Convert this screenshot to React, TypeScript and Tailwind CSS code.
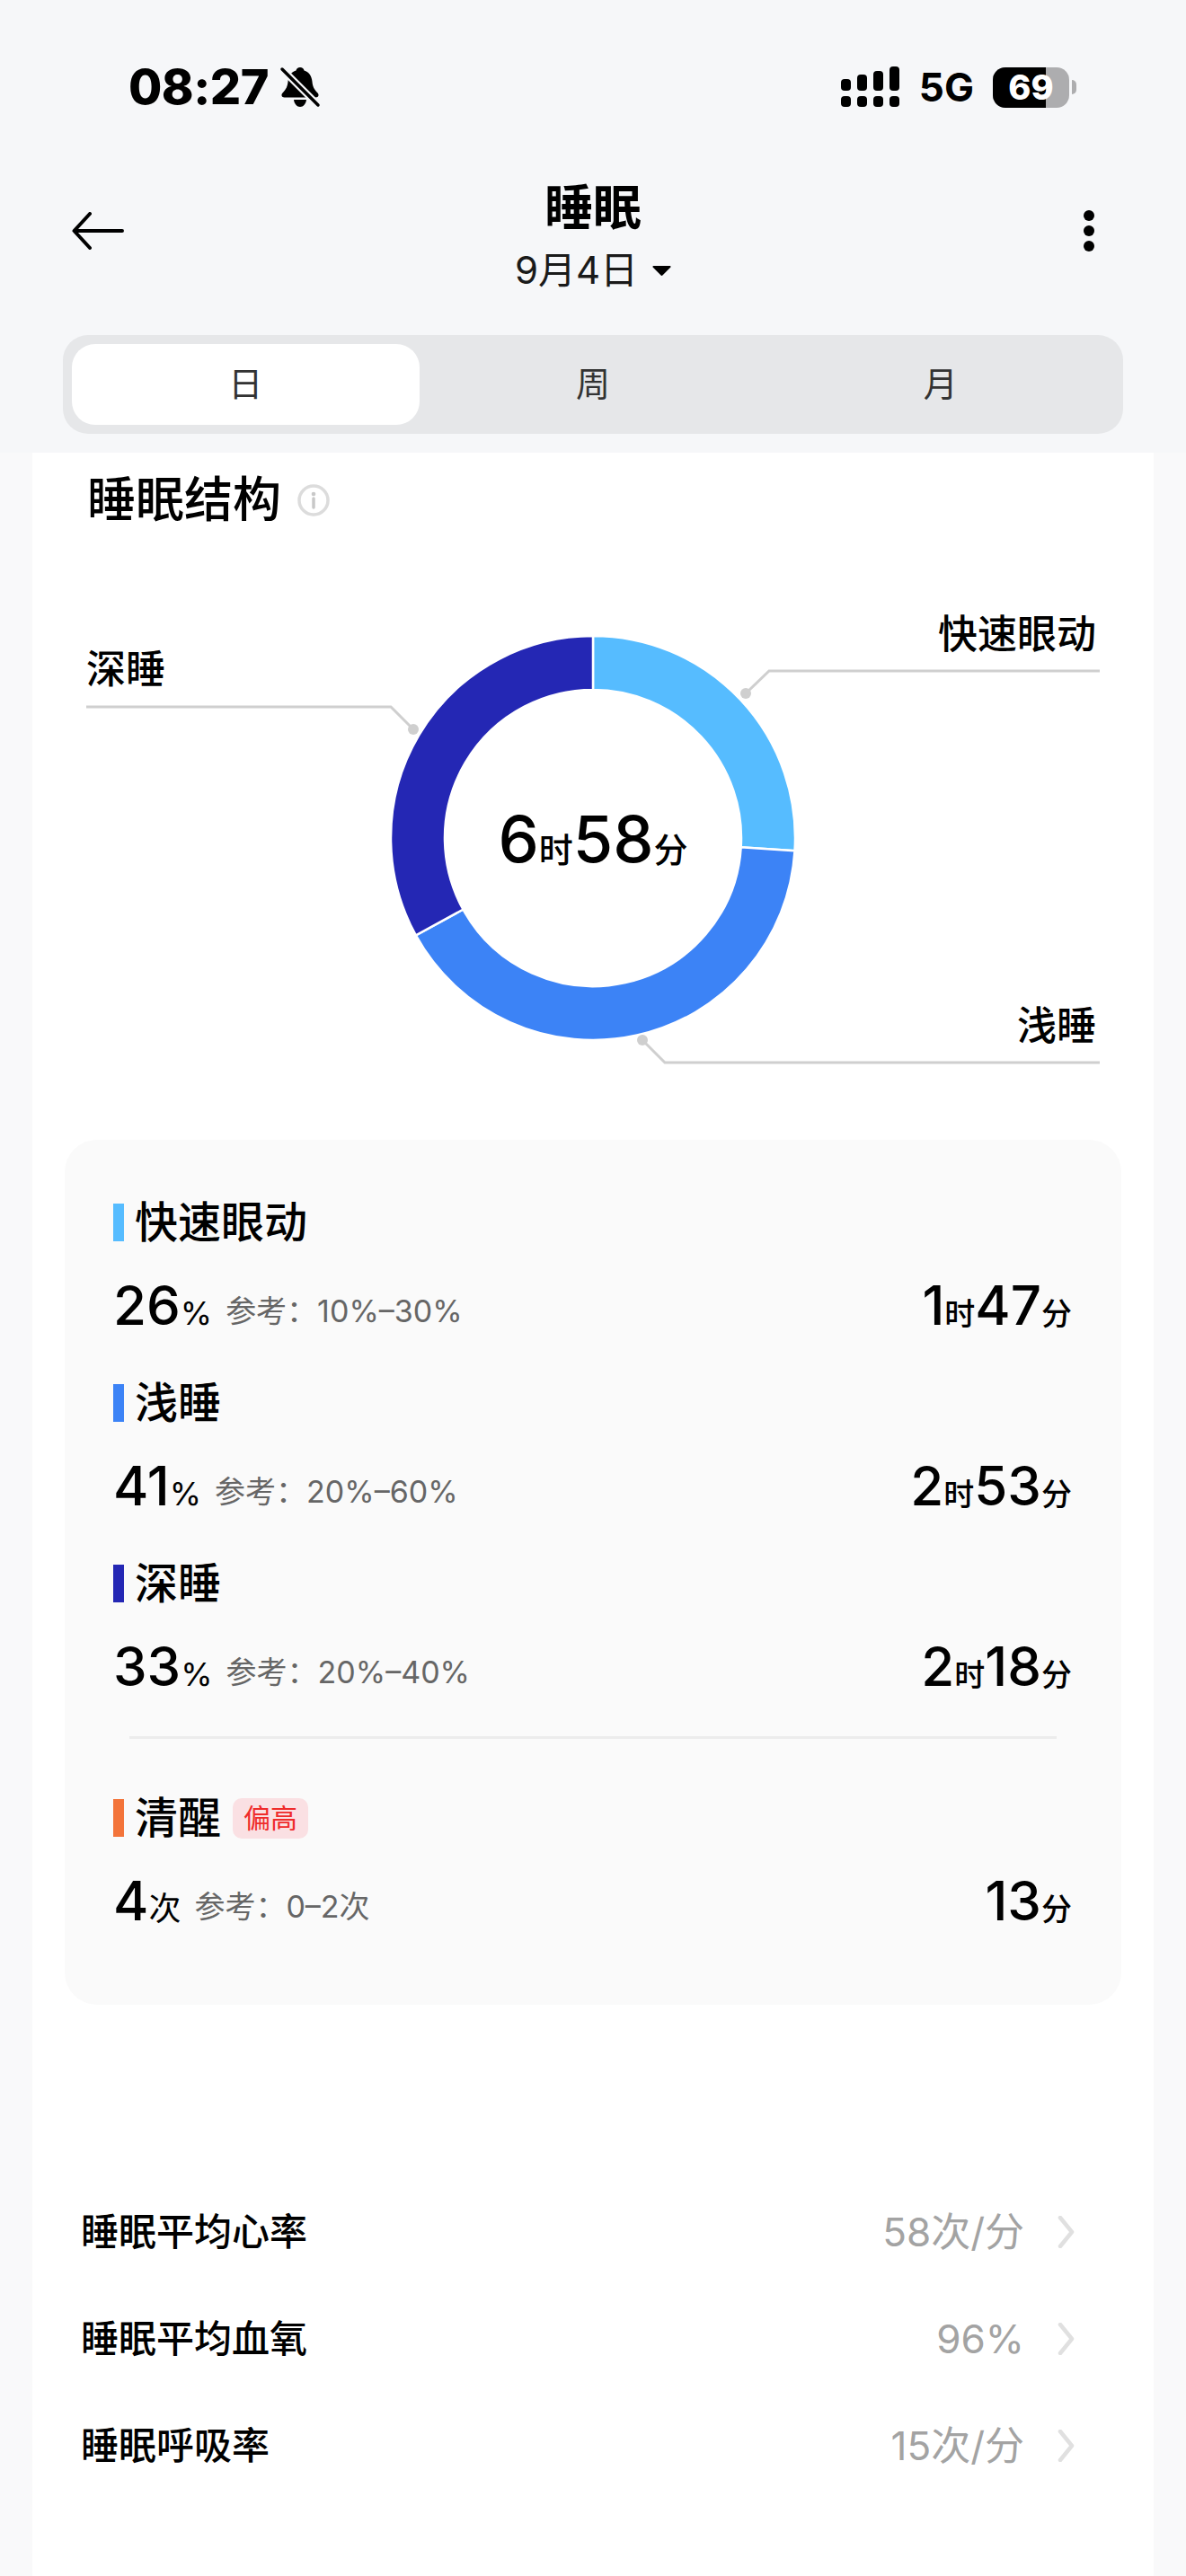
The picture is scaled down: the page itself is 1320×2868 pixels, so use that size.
const sans = "font-['Inter','Noto_Sans_CJK_SC',sans-serif]";

type Stage = {
  name: string;
  color: string;
  value: string;
  unit: string;
  reference: string;
  hours?: string;
  minutes: string;
  badge?: string;
};

const stages: Stage[] = [
  { name: "快速眼动", color: "bg-[#56bcff]", value: "26", unit: "%", reference: "参考：10%–30%", hours: "1", minutes: "47" },
  { name: "浅睡", color: "bg-[#3c83f6]", value: "41", unit: "%", reference: "参考：20%–60%", hours: "2", minutes: "53" },
  { name: "深睡", color: "bg-[#2427b4]", value: "33", unit: "%", reference: "参考：20%–40%", hours: "2", minutes: "18" },
];

const awake: Stage = { name: "清醒", color: "bg-[#f3743a]", value: "4", unit: "次", reference: "参考：0–2次", minutes: "13", badge: "偏高" };

const metrics = [
  { name: "睡眠平均心率", value: "58次/分" },
  { name: "睡眠平均血氧", value: "96%" },
  { name: "睡眠呼吸率", value: "15次/分" },
];

const segments = [
  { from: 0, to: 0.26, color: "#56bcff" },
  { from: 0.26, to: 0.67, color: "#3c83f6" },
  { from: 0.67, to: 1, color: "#2427b4" },
];

function arcPath(from: number, to: number) {
  const cx = 660;
  const cy = 933;
  const outer = 225;
  const inner = 165;
  const a = from * Math.PI * 2;
  const b = to * Math.PI * 2;
  const large = to - from > 0.5 ? 1 : 0;
  const p = (r: number, t: number) => `${cx + r * Math.sin(t)} ${cy - r * Math.cos(t)}`;
  return `M${p(outer, a)} A${outer} ${outer} 0 ${large} 1 ${p(outer, b)} L${p(inner, b)} A${inner} ${inner} 0 ${large} 0 ${p(inner, a)} Z`;
}

function StatusBar() {
  return (
    <div className="flex h-[46px] items-center justify-between pl-[143px] pr-[122px]">
      <div className="flex items-center gap-[12px]">
        <span className="text-[54px] font-extrabold leading-[46px] tracking-[-0.5px] text-black">08:27</span>
        <svg width="46" height="46" viewBox="0 0 46 46">
          <path d="M23 1c2.500 0 4 1.500 4.500 3.500C33 6 36 11 36.500 17c.4 5 2 8.500 6 12.500 2 2 1 5-2 5H5.500c-3 0-4-3-2-5 4-4 5.500-7.500 6-12.500C10 11 13 6 18.500 4.500 19 2.500 20.500 1 23 1z" fill="#000" />
          <path d="M16 37h14c-.5 4.500-3.500 8-7 8s-6.500-3.500-7-8z" fill="#000" />
          <path d="M3 3l40 40" stroke="#f6f7f9" strokeWidth="8" />
          <path d="M3 3l40 40" stroke="#000" strokeWidth="3.500" strokeLinecap="round" />
        </svg>
      </div>
      <div className="flex items-center">
        <svg width="65" height="46" viewBox="0 0 65 46">
          {[14, 9, 5, 0].map((y, i) => (
            <g key={i}>
              <rect x={i * 18} y={y} width="11" height={27 - y} rx="4" fill="#000" />
              <rect x={i * 18} y="33" width="11" height="12" rx="4" fill="#000" />
            </g>
          ))}
        </svg>
        <span className="ml-[22px] text-[44px] font-bold leading-[46px] text-black">5G</span>
        <div className="relative ml-[21px] h-[45px] w-[85px] overflow-hidden rounded-[14px] bg-[#adadaf]">
          <div className="h-full w-[59px] bg-black" />
          <span className="absolute inset-0 flex items-center justify-center text-[38px] font-extrabold leading-none text-white">69</span>
        </div>
        <div className="ml-[3px] h-[16px] w-[5px] rounded-r-full bg-[#adadaf]" />
      </div>
    </div>
  );
}

function Header() {
  return (
    <header className="h-[504px] bg-[#f6f7f9] pt-[74px]">
      <StatusBar />
      <div className="mt-[81px] grid grid-cols-[1fr_auto_1fr] items-center px-[80px]">
        <svg className="mb-[14px]" width="58" height="42" viewBox="0 0 58 42" fill="none">
          <path d="M56 21H3M20 2L2.500 21 20 40" stroke="#000" strokeWidth="4" strokeLinecap="round" strokeLinejoin="round" />
        </svg>
        <div className="flex flex-col items-center">
          <h1 className="text-[54px] font-semibold leading-[62px] text-black">睡眠</h1>
          <div className="mt-[13px] flex items-center gap-[16px]">
            <span className="text-[42px] leading-[50px] text-[#1a1a1a]">9月4日</span>
            <svg width="21" height="11" viewBox="0 0 22 12">
              <path d="M1 0h20a1 1 0 0 1 .800 1.600L12 11.500a1.400 1.400 0 0 1-2 0L.200 1.600A1 1 0 0 1 1 0z" fill="#000" />
            </svg>
          </div>
        </div>
        <div className="mb-[14px] flex flex-col items-end gap-[5px] pr-[22px]">
          <span className="size-[12px] rounded-full bg-black" />
          <span className="size-[12px] rounded-full bg-black" />
          <span className="size-[12px] rounded-full bg-black" />
        </div>
      </div>
      <div className="mx-[70px] mt-[47px] grid h-[110px] grid-cols-3 rounded-[28px] bg-[#e6e7e9] p-[10px] text-center text-[38px] leading-[88px] text-[#333]">
        <div className="rounded-[26px] bg-white">日</div>
        <div>周</div>
        <div>月</div>
      </div>
    </header>
  );
}

function Donut() {
  return (
    <div className="relative h-[686px]">
      <svg className="absolute inset-0" width="1248" height="686" viewBox="36 583 1248 686" fill="none">
        {segments.map((s) => (
          <path key={s.color} d={arcPath(s.from, s.to)} fill={s.color} stroke="#fff" strokeWidth="2.500" />
        ))}
        <path d="M830 772L856 747H1224" stroke="#cfcfcf" strokeWidth="3" />
        <path d="M460 812L435 787H96" stroke="#cfcfcf" strokeWidth="3" />
        <path d="M715 1158L740 1183H1224" stroke="#cfcfcf" strokeWidth="3" />
        <circle cx="830" cy="772" r="6" fill="#cfcfcf" />
        <circle cx="460" cy="812" r="6" fill="#cfcfcf" />
        <circle cx="715" cy="1158" r="6" fill="#cfcfcf" />
      </svg>
      <span className="absolute right-[64px] top-[96px] text-[44px] font-medium leading-[54px] text-black">快速眼动</span>
      <span className="absolute left-[60px] top-[135px] text-[44px] font-medium leading-[54px] text-black">深睡</span>
      <span className="absolute right-[64px] top-[532px] text-[44px] font-medium leading-[54px] text-black">浅睡</span>
      <div className="absolute inset-x-0 top-[301px] flex items-baseline justify-center font-medium text-black">
        <span className="text-[72px] leading-[100px]">6</span>
        <span className="text-[38px] leading-[100px]">时</span>
        <span className="text-[72px] leading-[100px]">58</span>
        <span className="text-[38px] leading-[100px]">分</span>
      </div>
    </div>
  );
}

function StageRow({ stage }: { stage: Stage }) {
  return (
    <div>
      <div className="flex h-[42px] items-center">
        <span className={`h-[42px] w-[12px] ${stage.color}`} />
        <span className="ml-[12px] text-[48px] font-medium leading-[42px] text-black">{stage.name}</span>
        {stage.badge && (
          <span className="ml-[13px] flex h-[45px] w-[84px] items-center justify-center rounded-[10px] bg-[#fae0e3] text-[30px] text-[#ef2b2b]">
            {stage.badge}
          </span>
        )}
      </div>
      <div className="mt-[36px] flex h-[70px] items-baseline justify-between font-medium leading-[70px] text-black">
        <div className="flex items-baseline">
          <span className="text-[60px]">{stage.value}</span>
          <span className="text-[36px] font-normal">{stage.unit}</span>
          <span className="ml-[15px] -translate-y-[3px] text-[34px] font-normal text-[#666]">{stage.reference}</span>
        </div>
        <div className="flex items-baseline">
          {stage.hours && (
            <>
              <span className="text-[60px]">{stage.hours}</span>
              <span className="text-[34px]">时</span>
            </>
          )}
          <span className="text-[60px]">{stage.minutes}</span>
          <span className="text-[34px]">分</span>
        </div>
      </div>
    </div>
  );
}

function StagePanel() {
  return (
    <div className="mx-[36px] flex h-[963px] flex-col rounded-[36px] bg-[#fafafa] pl-[54px] pr-[55px] pt-[71px]">
      <div className="flex flex-col gap-[53px]">
        {stages.map((stage) => (
          <StageRow key={stage.name} stage={stage} />
        ))}
      </div>
      <div className="ml-[18px] mr-[17px] mt-[43px] h-[3px] bg-[#ececec]" />
      <div className="mt-[67px]">
        <StageRow stage={awake} />
      </div>
    </div>
  );
}

function MetricList() {
  return (
    <div className="pl-[54px] pr-[88px] pt-[193px]">
      {metrics.map((m) => (
        <div key={m.name} className="flex h-[119px] items-center justify-between">
          <span className="text-[42px] font-medium text-black">{m.name}</span>
          <div className="flex items-center gap-[37px]">
            <span className="text-[44px] text-[#a3a3a3]">{m.value}</span>
            <svg width="19" height="36" viewBox="0 0 19 36" fill="none">
              <path d="M3 2l13 16L3 34" stroke="#e0e0e0" strokeWidth="4.500" strokeLinecap="round" strokeLinejoin="round" />
            </svg>
          </div>
        </div>
      ))}
    </div>
  );
}

export default function App() {
  return (
    <div className={`h-[2868px] w-[1320px] overflow-hidden bg-[#f9f9fa] ${sans}`}>
      <Header />
      <main className="mx-[36px] h-[2364px] bg-white">
        <div className="flex h-[79px] items-start gap-[18px] pl-[61px] pt-[23px]">
          <h2 className="text-[54px] font-medium leading-[60px] text-black">睡眠结构</h2>
          <svg className="mt-[12px]" width="36" height="36" viewBox="0 0 36 36" fill="none">
            <circle cx="18" cy="18" r="16" stroke="#dcdcdc" strokeWidth="3.500" />
            <circle cx="18" cy="11" r="2.300" fill="#c8c8c8" />
            <path d="M18 16v10" stroke="#c8c8c8" strokeWidth="3.500" strokeLinecap="round" />
          </svg>
        </div>
        <Donut />
        <StagePanel />
        <MetricList />
      </main>
    </div>
  );
}
